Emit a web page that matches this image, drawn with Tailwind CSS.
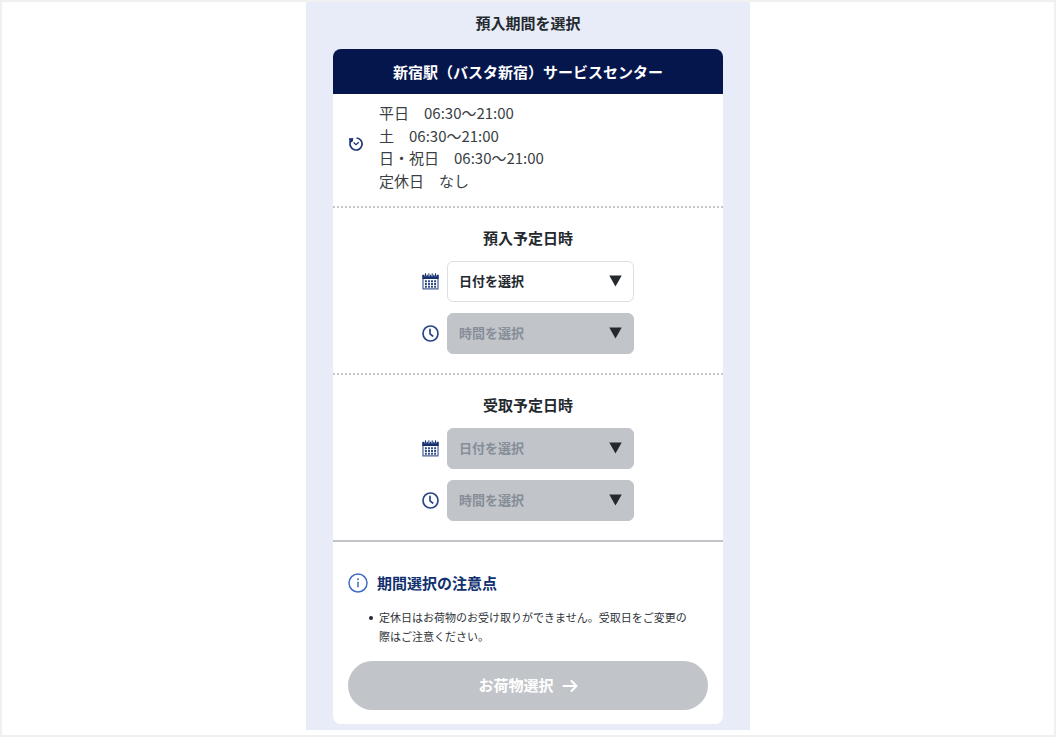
<!DOCTYPE html>
<html lang="ja">
<head>
<meta charset="utf-8">
<meta name="viewport" content="width=device-width, initial-scale=1">
<title>預入期間を選択</title>
<script src="https://cdn.jsdelivr.net/npm/@tailwindcss/browser@4"></script>
</head>
<body class="min-h-screen border-2 border-[#f0f0f0] bg-white font-['Noto_Sans_CJK_JP',sans-serif] text-[15px] text-[#24292e]">
<svg class="hidden" aria-hidden="true">
  <symbol id="calendar" viewBox="0 0 17 17">
    <path d="M1 2.500h15v13.300h-15z" fill="#fff" stroke="#4a6196" stroke-width="1.200"/>
    <path d="M.4 1.800h16.200v4.200H.4z" fill="#15306f"/>
    <path d="M3.500 0v3.200M6.900 0v3.200M10.200 0v3.200M13.500 0v3.200" stroke="#fff" stroke-width="2"/>
    <path d="M3.500 .3v3M6.900 .3v3M10.200 .3v3M13.500 .3v3" stroke="#15306f" stroke-width="1"/>
    <path d="M3.900 7.200v7.500M7 7.200v7.500M10 7.200v7.500M13.100 7.200v7.500" stroke="#2b4580" stroke-width="1.900" stroke-dasharray="2 .75"/>
  </symbol>
  <symbol id="clock" viewBox="0 0 17 17">
    <g fill="none" stroke="#2a4687" stroke-width="1.700" stroke-linecap="round" stroke-linejoin="round">
      <circle cx="8.500" cy="8.500" r="7.500"/>
      <path d="M8 4.300v4.500l2.700 2.200"/>
    </g>
  </symbol>
  <symbol id="triangle" viewBox="0 0 13 12"><path d="M.3.5h12.400L6.500 11.500z" fill="#24292e"/></symbol>
</svg>

<main class="mx-auto max-w-[444px] bg-[#e7ecf8] px-[27px] pt-[10px] pb-[6px]">
  <h1 class="mb-[15px] text-center leading-[22px] font-bold">預入期間を選択</h1>

  <div class="overflow-hidden rounded-lg bg-white">
    <h2 class="bg-[#05164d] py-[11px] text-center leading-[23px] font-bold text-white">新宿駅（バスタ新宿）サービスセンター</h2>

    <section class="flex items-center gap-4 border-b-2 border-dotted border-[#c5c9ce] px-4 pt-2 pb-[14px]">
      <svg class="mb-[6px] size-[14px] shrink-0" viewBox="0 0 14 14" fill="none" stroke="#1c3674" stroke-width="1.700" aria-hidden="true">
        <path d="M7.500 1A6 6 0 1 1 1.600 4.500"/>
        <path d="M0 1.200L4.300 1 3.800 4.600 .6 6z" fill="#1c3674" stroke="none"/>
        <path d="M4.600 5.600L7 7.700 9.800 5.300" stroke-width="1.300"/>
      </svg>
      <p class="leading-normal text-[#3a3f44]">平日　06:30～21:00<br>土　06:30～21:00<br>日・祝日　06:30～21:00<br>定休日　なし</p>
    </section>

    <section class="flex flex-col items-center border-b-2 border-dotted border-[#c5c9ce] py-[19px]">
      <h3 class="mb-3 leading-[22px] font-bold">預入予定日時</h3>
      <div class="flex flex-col gap-[11px]">
        <div class="flex items-center gap-2">
          <svg class="size-[17px]" aria-hidden="true"><use href="#calendar"/></svg>
          <div class="relative">
            <select aria-label="預入日付" class="h-[41px] w-[187px] appearance-none rounded-md border border-[#dcdfe4] bg-white pb-[2px] pl-[11px] text-[13px] font-bold text-[#24292e]"><option>日付を選択</option></select>
            <svg class="pointer-events-none absolute top-[14px] right-3 h-3 w-[13px]" aria-hidden="true"><use href="#triangle"/></svg>
          </div>
        </div>
        <div class="flex items-center gap-2">
          <svg class="size-[17px]" aria-hidden="true"><use href="#clock"/></svg>
          <div class="relative">
            <select disabled aria-label="預入時間" class="h-[41px] w-[187px] appearance-none rounded-md border border-[#c1c4c9] bg-[#c1c4c9] pb-[2px] pl-[11px] text-[13px] font-bold text-[#868e98] opacity-100"><option>時間を選択</option></select>
            <svg class="pointer-events-none absolute top-[14px] right-3 h-3 w-[13px]" aria-hidden="true"><use href="#triangle"/></svg>
          </div>
        </div>
      </div>
    </section>

    <section class="flex flex-col items-center border-b-2 border-[#c1c5c9] py-[19px]">
      <h3 class="mb-3 leading-[22px] font-bold">受取予定日時</h3>
      <div class="flex flex-col gap-[11px]">
        <div class="flex items-center gap-2">
          <svg class="size-[17px]" aria-hidden="true"><use href="#calendar"/></svg>
          <div class="relative">
            <select disabled aria-label="受取日付" class="h-[41px] w-[187px] appearance-none rounded-md border border-[#c1c4c9] bg-[#c1c4c9] pb-[2px] pl-[11px] text-[13px] font-bold text-[#868e98] opacity-100"><option>日付を選択</option></select>
            <svg class="pointer-events-none absolute top-[14px] right-3 h-3 w-[13px]" aria-hidden="true"><use href="#triangle"/></svg>
          </div>
        </div>
        <div class="flex items-center gap-2">
          <svg class="size-[17px]" aria-hidden="true"><use href="#clock"/></svg>
          <div class="relative">
            <select disabled aria-label="受取時間" class="h-[41px] w-[187px] appearance-none rounded-md border border-[#c1c4c9] bg-[#c1c4c9] pb-[2px] pl-[11px] text-[13px] font-bold text-[#868e98] opacity-100"><option>時間を選択</option></select>
            <svg class="pointer-events-none absolute top-[14px] right-3 h-3 w-[13px]" aria-hidden="true"><use href="#triangle"/></svg>
          </div>
        </div>
      </div>
    </section>

    <section class="px-[15px] pt-[30px] pb-[14px]">
      <h3 class="flex items-center gap-[9px] leading-[22px] font-bold text-[#12316f]">
        <svg class="size-5" viewBox="0 0 20 20" fill="none" stroke="#3f6bc4" aria-hidden="true">
          <circle cx="10" cy="10" r="9" stroke-width="1.500"/>
          <path d="M10 8.700v5.500" stroke-width="1.500"/>
          <circle cx="10" cy="6.300" r="1" fill="#3f6bc4" stroke="none"/>
        </svg>
        期間選択の注意点
      </h3>
      <ul class="mt-[14px] mb-[15px] pl-[21px] text-[11px] leading-[19px] text-[#2f3438]">
        <li class="flex gap-[6px]">
          <span class="mt-2 size-1 shrink-0 rounded-full bg-[#24292e]"></span>
          <span>定休日はお荷物のお受け取りができません。受取日をご変更の<br>際はご注意ください。</span>
        </li>
      </ul>
      <button type="button" disabled class="flex h-[49px] w-full items-center justify-center gap-2 rounded-full bg-[#c1c4c9] font-bold text-white">
        お荷物選択
        <svg class="h-3 w-4" viewBox="0 0 16 12" fill="none" stroke="#fff" stroke-width="2" stroke-linecap="round" stroke-linejoin="round" aria-hidden="true"><path d="M1.500 6h13M9.500 1l5 5-5 5"/></svg>
      </button>
    </section>
  </div>
</main>
</body>
</html>
